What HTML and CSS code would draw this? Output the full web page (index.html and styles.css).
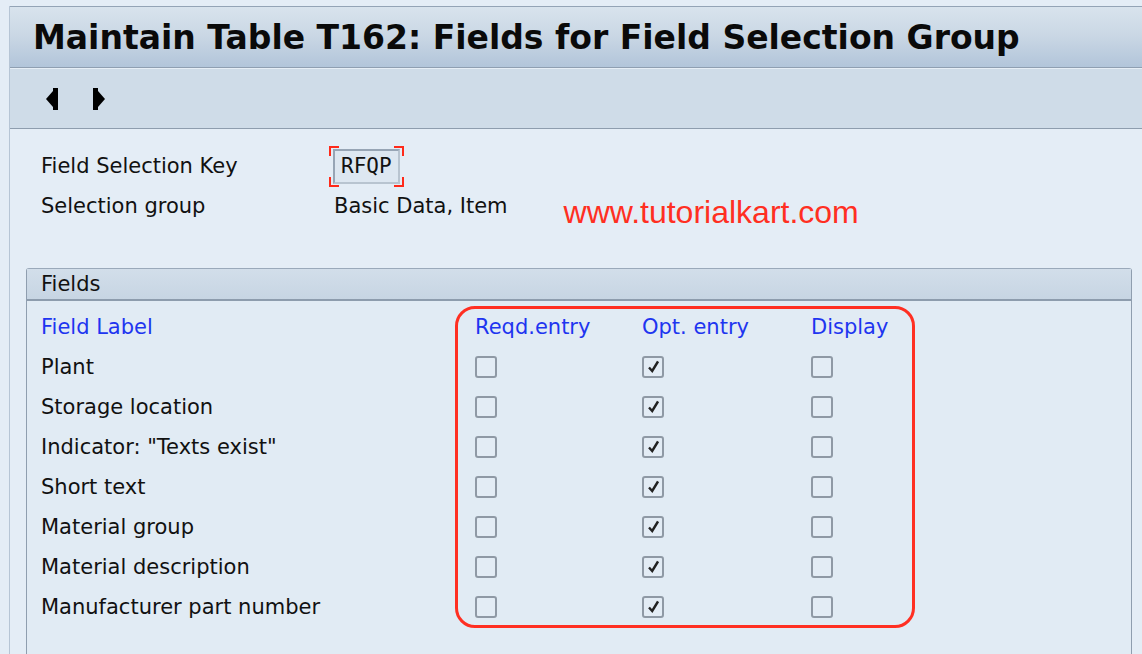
FILE: index.html
```html
<!DOCTYPE html>
<html>
<head>
<meta charset="utf-8">
<link rel="stylesheet" href="styles.css">
</head>
<body>
<div class="frame">
  <div class="titlebar"><h1 class="title">Maintain Table T162: Fields for Field Selection Group</h1></div>
  <div class="toolbar">
    <svg class="nav" width="12" height="22" viewBox="0 0 12 22"><polygon points="0,11 7,3 7,0 12,0 12,22 7,22 7,19" fill="#000"/></svg>
    <svg class="nav" width="12" height="22" viewBox="0 0 12 22"><polygon points="12,11 5,3 5,0 0,0 0,22 5,22 5,19" fill="#000"/></svg>
  </div>
  <div class="content">
    <div class="form">
      <div class="flabel">Field Selection Key</div>
      <div class="fval"><span class="keybox"><span class="keyinput">RFQP</span></span></div>
      <div class="flabel">Selection group</div>
      <div class="fval">Basic Data, Item <span class="watermark">www.tutorialkart.com</span></div>
    </div>
    <div class="group">
      <div class="ghead">Fields</div>
      <div class="gbody">
        <div class="row head"><span>Field Label</span><span>Reqd.entry</span><span>Opt. entry</span><span>Display</span></div>
        <div class="row"><span>Plant</span><span class="cb"></span><span class="cb on"></span><span class="cb"></span></div>
        <div class="row"><span>Storage location</span><span class="cb"></span><span class="cb on"></span><span class="cb"></span></div>
        <div class="row"><span>Indicator: "Texts exist"</span><span class="cb"></span><span class="cb on"></span><span class="cb"></span></div>
        <div class="row"><span>Short text</span><span class="cb"></span><span class="cb on"></span><span class="cb"></span></div>
        <div class="row"><span>Material group</span><span class="cb"></span><span class="cb on"></span><span class="cb"></span></div>
        <div class="row"><span>Material description</span><span class="cb"></span><span class="cb on"></span><span class="cb"></span></div>
        <div class="row"><span>Manufacturer part number</span><span class="cb"></span><span class="cb on"></span><span class="cb"></span></div>
        <div class="highlight"></div>
      </div>
    </div>
  </div>
</div>
</body>
</html>
```
FILE: styles.css
```css
html, body { margin: 0; padding: 0; }
body {
  width: 1142px; height: 654px; overflow: hidden;
  background: #e4edf6;
  font-family: "DejaVu Sans", sans-serif;
  color: #111;
}
.frame {
  margin: 6px 0 0 9px;
  border-left: 1px solid #b6c5d5;
  height: 648px;
  display: flex; flex-direction: column;
  overflow: hidden;
}
.titlebar {
  height: 60px; flex: none;
  border-top: 1px solid #94a4b6;
  border-bottom: 1px solid #8f9fb1;
  background: linear-gradient(#d8e3ed 0%, #cbd8e5 45%, #b2c5da 100%);
  display: flex; align-items: center;
  padding-left: 23px;
}
.title {
  margin: 0; font-size: 33px; font-weight: bold; color: #0a0a0a;
}
.toolbar {
  height: 59px; flex: none;
  border-top: 1px solid #e6eef6;
  border-bottom: 1px solid #8e9dae;
  background: #cfdce8;
  display: flex; align-items: center; gap: 35px;
  padding-left: 36px;
}
.nav { display: block; }
.content {
  flex: 1; display: flex; flex-direction: column;
  padding-top: 17px;
}
.form {
  display: grid;
  grid-template-columns: 293px auto;
  grid-auto-rows: 40px;
  align-items: center;
  padding-left: 31px;
  font-size: 21px;
}
.fval { display: flex; align-items: center; }
.keybox {
  position: relative;
  display: inline-flex; padding: 3px 4px;
  margin-left: -5px;
  background:
    linear-gradient(#ff2a1a,#ff2a1a) 0 0/10px 2px no-repeat,
    linear-gradient(#ff2a1a,#ff2a1a) 0 0/2px 10px no-repeat,
    linear-gradient(#ff2a1a,#ff2a1a) 100% 0/10px 2px no-repeat,
    linear-gradient(#ff2a1a,#ff2a1a) 100% 0/2px 10px no-repeat,
    linear-gradient(#ff2a1a,#ff2a1a) 0 100%/10px 2px no-repeat,
    linear-gradient(#ff2a1a,#ff2a1a) 0 100%/2px 10px no-repeat,
    linear-gradient(#ff2a1a,#ff2a1a) 100% 100%/10px 2px no-repeat,
    linear-gradient(#ff2a1a,#ff2a1a) 100% 100%/2px 10px no-repeat;
}
.keyinput {
  font-family: "DejaVu Sans Mono", monospace; font-size: 21px;
  padding: 3px 6px 3px 6px;
  border: 2px solid #97a5b5;
  border-bottom-color: #b8c4d0; border-right-color: #b8c4d0;
  background: #dde7f1;
  line-height: 25px;
}
.watermark {
  font-family: "Liberation Sans", Arial, sans-serif;
  font-size: 32px; color: #ff2f22;
  margin-left: 56px; margin-top: 12px;
}
.group {
  flex: 1;
  display: flex; flex-direction: column;
  margin: 42px 0 0 16px;
  border-left: 1px solid #8f9eaf;
  border-right: 1px solid #8f9eaf;
  border-top: 1px solid #9aa9ba;
  border-radius: 3px 3px 0 0;
  width: 1104px;
}
.ghead {
  height: 30px; line-height: 30px; flex: none;
  padding-left: 14px;
  font-size: 21px;
  background: linear-gradient(#d2deea 0%, #c7d5e3 100%);
  border-bottom: 2px solid #8d9cad;
}
.gbody {
  flex: 1;
  position: relative;
  background: #e1ebf4;
  padding: 6px 0 0 14px;
}
.row {
  display: grid;
  grid-template-columns: 434px 167px 169px auto;
  height: 40px; align-items: center;
  font-size: 21px;
}
.row.head { color: #1e35f0; }
.cb {
  width: 18px; height: 18px;
  border: 2px solid #8f99a5;
  border-radius: 3px;
  background: #e3ecf5;
  position: relative;
}
.cb.on::after {
  content: ""; position: absolute;
  left: 4px; top: 2px;
  width: 11px; height: 13px;
  background: no-repeat center/contain url("data:image/svg+xml,%3Csvg xmlns='http://www.w3.org/2000/svg' viewBox='0 0 11 13'%3E%3Cpath d='M1 7.5 L4.2 11 L10 1.5' fill='none' stroke='%23222' stroke-width='2.4' stroke-linejoin='miter'/%3E%3C/svg%3E");
}
.highlight {
  position: absolute;
  left: 428px; top: 5px;
  width: 454px; height: 316px;
  border: 3px solid #ff2f22;
  border-radius: 20px;
  pointer-events: none;
}
```
